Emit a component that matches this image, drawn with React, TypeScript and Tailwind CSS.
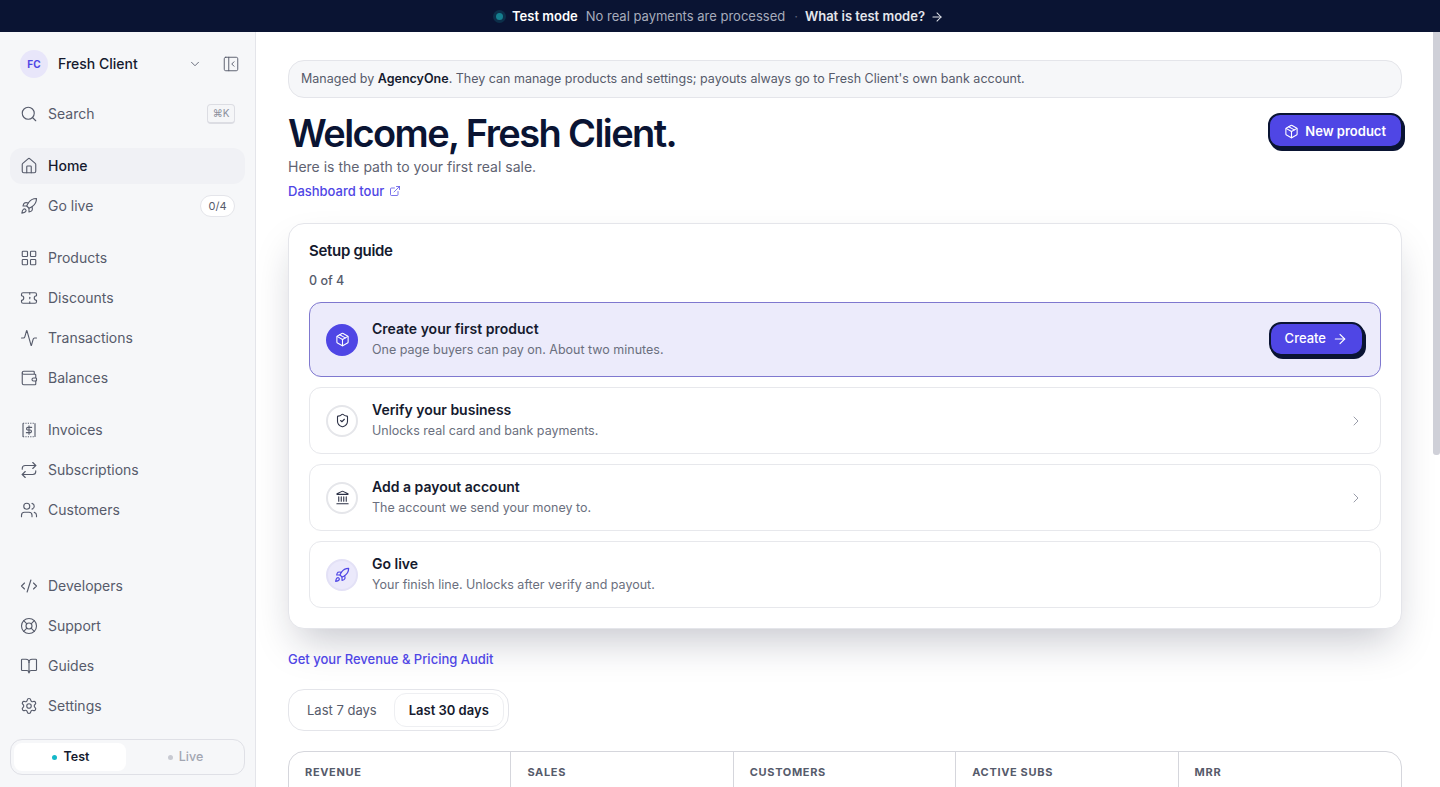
import type { ElementType } from "react";
import {
  Activity,
  ArrowRight,
  BookOpen,
  ChevronDown,
  ChevronRight,
  CodeXml,
  ExternalLink,
  House,
  Landmark,
  LayoutGrid,
  LifeBuoy,
  Package,
  PanelLeftClose,
  Repeat,
  Rocket,
  Search,
  Settings,
  ShieldCheck,
  Ticket,
  Users,
  Wallet,
} from "lucide-react";

// square bill with perforated edges, lucide has nothing close
function InvoiceIcon({ size = 18, strokeWidth = 1.5, className = "" }: { size?: number; strokeWidth?: number; className?: string }) {
  return (
    <svg width={size} height={size} viewBox="0 0 24 24" fill="none" stroke="currentColor" strokeWidth={strokeWidth} strokeLinecap="round" strokeLinejoin="round" className={className}>
      <path d="M4 3.5v17M20 3.5v17" />
      <path d="M4 3h16M4 21h16" strokeDasharray="1.6 1.6" strokeLinecap="butt" />
      <path d="M12 6.5v11" />
      <path d="M15.5 8.5h-5a1.75 1.75 0 0 0 0 3.5h3a1.75 1.75 0 0 1 0 3.5h-5" />
    </svg>
  );
}

const navGroups = [
  [
    { label: "Products", icon: LayoutGrid },
    { label: "Discounts", icon: Ticket },
    { label: "Transactions", icon: Activity },
    { label: "Balances", icon: Wallet },
  ],
  [
    { label: "Invoices", icon: InvoiceIcon },
    { label: "Subscriptions", icon: Repeat },
    { label: "Customers", icon: Users },
  ],
];

const footerNav = [
  { label: "Developers", icon: CodeXml },
  { label: "Support", icon: LifeBuoy },
  { label: "Guides", icon: BookOpen },
  { label: "Settings", icon: Settings },
];

const steps = [
  { title: "Verify your business", text: "Unlocks real card and bank payments.", icon: ShieldCheck, chevron: true },
  { title: "Add a payout account", text: "The account we send your money to.", icon: Landmark, chevron: true },
  { title: "Go live", text: "Your finish line. Unlocks after verify and payout.", icon: Rocket, chevron: false },
];

const metrics = ["Revenue", "Sales", "Customers", "Active subs", "MRR"];

function NavRow({ label, icon: Icon }: { label: string; icon: ElementType }) {
  return (
    <div className="flex h-9 items-center gap-[10px] rounded-xl px-[10px] text-[14px] leading-5 text-[#565b6b]">
      <Icon size={18} strokeWidth={1.5} className="shrink-0" />
      <span>{label}</span>
    </div>
  );
}

function Sidebar() {
  return (
    <aside className="flex w-[256px] shrink-0 flex-col border-r border-[#e4e5ea] bg-[#f6f7f9] px-[10px] pt-[18px] pb-3">
      <div className="flex h-7 items-center pl-[10px] pr-[5px]">
        <div className="flex h-7 w-7 items-center justify-center rounded-full bg-[#e8e6fa] text-[10px] font-bold text-[#4f46e5]">
          FC
        </div>
        <span className="ml-[10px] flex-1 text-[14px] font-medium leading-5 text-[#151a2e]">Fresh Client</span>
        <ChevronDown size={14} strokeWidth={1.5} className="mr-[20px] text-[#565b6b]" />
        <PanelLeftClose size={18} strokeWidth={1.25} className="text-[#565b6b]" />
      </div>

      <div className="mt-[18px] flex h-9 items-center gap-[10px] px-[10px] text-[14px] leading-5 text-[#565b6b]">
        <Search size={18} strokeWidth={1.5} className="shrink-0" />
        <span className="flex-1">Search</span>
        <kbd className="rounded-[4px] border border-b-2 border-[#dcdde3] bg-[#f5f6f8] px-[4.5px] py-[2px] font-['Inter'] text-[10px] leading-[13px] text-[#8b8f9c]">
          ⌘K
        </kbd>
      </div>

      <div className="mt-4 flex flex-col gap-1">
        <div className="flex h-9 items-center gap-[10px] rounded-xl bg-[#f0f1f5] px-[10px] text-[14px] font-medium leading-5 text-[#151a2e]">
          <House size={18} strokeWidth={1.5} className="shrink-0 text-[#565b6b]" />
          <span>Home</span>
        </div>
        <div className="flex h-9 items-center gap-[10px] px-[10px] text-[14px] leading-5 text-[#565b6b]">
          <Rocket size={18} strokeWidth={1.5} className="shrink-0" />
          <span className="flex-1">Go live</span>
          <span className="flex h-[22px] items-center rounded-full border border-[#e4e5ea] bg-white px-[7.5px] text-[11px] text-[#565b6b]">
            0/4
          </span>
        </div>
      </div>

      {navGroups.map((group) => (
        <div key={group[0].label} className="mt-4 flex flex-col gap-1">
          {group.map((item) => (
            <NavRow key={item.label} {...item} />
          ))}
        </div>
      ))}

      <div className="mt-auto flex flex-col gap-1">
        {footerNav.map((item) => (
          <NavRow key={item.label} {...item} />
        ))}
      </div>

      <div className="mt-[15px] flex h-9 gap-1 rounded-xl border border-[#dfe0e6] bg-[#f6f7f9] p-[3px]">
        <div className="flex flex-1 items-center justify-center gap-[7px] rounded-lg bg-white pl-[1px] text-[12.5px] font-semibold text-[#151a2e]">
          <span className="h-[5px] w-[5px] rounded-full bg-[#14b8c8]" />
          Test
        </div>
        <div className="flex flex-1 items-center justify-center gap-[6px] text-[12.5px] font-medium text-[#a3a6b2]">
          <span className="h-[5px] w-[5px] rounded-full bg-[#c8cad2]" />
          Live
        </div>
      </div>
    </aside>
  );
}

function StepRow({ title, text, icon: Icon, chevron }: (typeof steps)[number]) {
  const rocket = !chevron;
  return (
    <div className="flex h-[67px] items-center rounded-xl border border-[#e7e8ec] bg-white px-4">
      <div
        className={
          rocket
            ? "flex h-8 w-8 items-center justify-center rounded-full border-2 border-[#e3e1f6] bg-[#ebe9fb] text-[#4f46e5]"
            : "flex h-8 w-8 items-center justify-center rounded-full border-2 border-[#e5e6ea] bg-white text-[#2c3146]"
        }
      >
        <Icon size={rocket ? 16 : 15} strokeWidth={1.75} />
      </div>
      <div className="ml-[14px] flex-1">
        <div className="text-[14px] font-semibold leading-5 text-[#151a2e]">{title}</div>
        <div className="mt-[1px] text-[12.5px] leading-[20px] text-[#6b6f7e]">{text}</div>
      </div>
      {chevron && <ChevronRight size={16} strokeWidth={1.5} className="text-[#9a9daa]" />}
    </div>
  );
}

export default function App() {
  return (
    <div className="flex h-[787px] flex-col overflow-hidden bg-white font-['Inter',sans-serif]">
      <div className="flex h-8 shrink-0 items-center justify-center bg-[#0a1433] pt-[1px] text-[13px]">
        <span className="mr-[9px] h-[7px] w-[7px] rounded-full bg-[#157f8f] shadow-[0_0_0_3px_rgba(21,127,143,0.25)]" />
        <span className="font-semibold text-white">Test mode</span>
        <span className="ml-2 text-[#a7acbc]">No real payments are processed</span>
        <span className="ml-[9px] mr-[7px] text-[#5b6279]">·</span>
        <span className="font-semibold text-[#e4e6ec]">What is test mode?</span>
        <ArrowRight size={14} strokeWidth={1.75} className="ml-[5px] text-[#e4e6ec]" />
      </div>

      <div className="relative flex min-h-0 flex-1">
        <Sidebar />
        <main className="min-w-0 flex-1 overflow-hidden bg-white pl-8 pr-[38px] pt-7">
          <div className="flex h-[38px] items-center rounded-2xl border border-[#e4e5ea] bg-[#f6f7f9] px-3 pt-[1px] text-[12.5px] text-[#565b6b]">
            <span>
              Managed by <strong className="font-semibold text-[#151a2e]">AgencyOne</strong>. They can manage products
              and settings; payouts always go to Fresh Client's own bank account.
            </span>
          </div>

          <div className="mt-[13px] flex items-start justify-between">
            <div>
              <h1 className="text-[38px] font-semibold leading-[44px] tracking-[-0.042em] text-[#0a1433]">
                Welcome, Fresh Client.
              </h1>
              <p className="text-[14px] leading-[24px] text-[#5f6372]">Here is the path to your first real sale.</p>
              <a className="mt-[2px] flex items-center gap-[5px] text-[13px] font-medium leading-[20px] text-[#4f46e5]">
                Dashboard tour <ExternalLink size={12} strokeWidth={1.5} />
              </a>
            </div>
            <button className="mr-[-1px] mt-[2px] flex h-[35px] items-center gap-[6px] rounded-xl border-2 border-[#0a1433] bg-[#4f46e5] pb-0 pl-[14px] pr-[15px] pt-[1px] text-[13px] font-semibold leading-5 text-white shadow-[2px_3px_0_#0a1433]">
              <Package size={15} strokeWidth={1.75} />
              New product
            </button>
          </div>

          <section className="mt-[22px] h-[406px] rounded-2xl border border-[#e4e5ea] bg-white px-5 pt-[17px] shadow-[0_20px_40px_-10px_rgba(20,25,50,0.25)]">
            <h2 className="text-[15px] font-semibold leading-[20px] tracking-[-0.02em] text-[#151a2e]">Setup guide</h2>
            <div className="mt-[11px] text-[12.5px] font-medium leading-[18px] text-[#565b6b]">0 of 4</div>

            <div className="mt-[12px] flex h-[75px] items-center rounded-xl border border-[#7f78cf] bg-[#ecebfb] pl-4 pr-4">
              <div className="flex h-8 w-8 items-center justify-center rounded-full bg-[#4f46e5] text-white">
                <Package size={15} strokeWidth={1.75} />
              </div>
              <div className="ml-[14px] flex-1">
                <div className="text-[14px] font-semibold leading-5 text-[#151a2e]">Create your first product</div>
                <div className="mt-[1px] text-[12.5px] leading-[20px] text-[#6b6f7e]">One page buyers can pay on. About two minutes.</div>
              </div>
              <button className="mb-[1px] flex h-[34px] items-center gap-[6px] rounded-xl border-2 border-[#0a1433] bg-[#4f46e5] px-[14px] text-[13px] font-medium text-white shadow-[2px_3px_0_#0a1433]">
                Create
                <ArrowRight size={16} strokeWidth={1.75} />
              </button>
            </div>

            <div className="mt-[10px] flex flex-col gap-[10px]">
              {steps.map((step) => (
                <StepRow key={step.title} {...step} />
              ))}
            </div>
          </section>

          <a className="mt-5 block text-[13px] font-medium leading-5 text-[#4f46e5]">Get your Revenue &amp; Pricing Audit</a>

          <div className="mt-5 inline-flex h-[42px] items-center gap-[3px] rounded-2xl border border-[#e4e5ea] bg-white p-1 text-[13px] leading-5">
            <span className="px-[14px] text-[#565b6b]">Last 7 days</span>
            <span className="flex h-[34px] items-center rounded-xl border border-[#eeeff2] bg-white px-[14px] font-semibold text-[#151a2e]">
              Last 30 days
            </span>
          </div>

          <div className="mt-5 grid h-[80px] grid-cols-5 rounded-2xl border border-[#d5d6dc]">
            {metrics.map((name, i) => (
              <div
                key={name}
                className={
                  i === 0
                    ? "px-4 pt-[13px] text-[11px] font-bold uppercase leading-[14px] tracking-[0.06em] text-[#565b6b]"
                    : "-ml-px border-l border-[#d5d6dc] px-4 pt-[13px] text-[11px] font-bold uppercase leading-[14px] tracking-[0.06em] text-[#565b6b]"
                }
              >
                {name}
              </div>
            ))}
          </div>
        </main>

        {/* scrollbar thumb sits over the page edge */}
        <div className="absolute right-0 top-0 h-[423px] w-[7px] rounded-b-[3px] bg-[#cfd0d8]" />
      </div>
    </div>
  );
}
